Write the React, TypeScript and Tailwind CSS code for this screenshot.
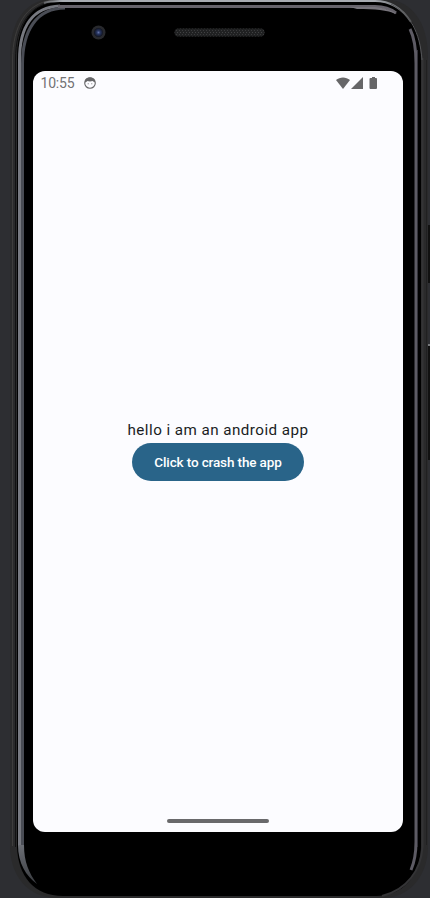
import React from "react";

function PhoneBody() {
  return (
    <svg className="absolute inset-0" width="430" height="898" viewBox="0 0 430 898" fill="none" aria-hidden="true">
      <defs>
        <linearGradient id="topRim" x1="40" y1="0" x2="420" y2="0" gradientUnits="userSpaceOnUse">
          <stop offset="0" stopColor="#555659" />
          <stop offset="0.06" stopColor="#a7abb1" />
          <stop offset="0.88" stopColor="#a7abb1" />
          <stop offset="1" stopColor="#444" />
        </linearGradient>
        <linearGradient id="lowerRim" x1="0" y1="845" x2="0" y2="884" gradientUnits="userSpaceOnUse">
          <stop offset="0" stopColor="#6c6f75" />
          <stop offset="1" stopColor="#393b40" />
        </linearGradient>
        <pattern id="mesh" width="3" height="4" patternUnits="userSpaceOnUse">
          <rect width="3" height="4" fill="#202122" />
          <rect width="1" height="1" x="0" y="0" fill="#414243" />
          <rect width="1" height="1" x="2" y="2" fill="#393a3b" />
        </pattern>
        <radialGradient id="lens">
          <stop offset="0" stopColor="#6272a8" />
          <stop offset="0.4" stopColor="#26345f" />
          <stop offset="1" stopColor="#10131e" />
        </radialGradient>
      </defs>
      <path d="M10 56C10 22 25 0 52 -1H384C412 0 428 22 428 58V848C427 876 410 898 382 898H57C28 898 11 876 10 848Z" fill="#2a2a2b" />
      <path d="M12.5 846V60C13 25 26 4 52 0" stroke="#3e3d3c" />
      <path d="M17 58C17 24 31 3 57 2H378C405 3 421 27 421 60V847C420 877 402 896 376 896H63C34 896 18 876 17 847Z" fill="#000" />
      <path d="M15.5 847V60C15.5 25 30 4 55 2" stroke="#111" />
      <path d="M44 3C49 1 54 1 60 1H375C390 1 402 8 411 22" stroke="url(#topRim)" strokeWidth="2" />
      <path d="M19.5 846V60C19.5 26 33 7 60 6" stroke="#777980" strokeWidth="3" />
      <path d="M22.5 846V64C22.5 30 37 8 65 8" stroke="#4a4d55" strokeWidth="3" />
      <path d="M18 845C18 863 26 876 37 884C29 873 24 862 24 845Z" fill="url(#lowerRim)" />
      <path d="M58 6.5H375C384 6.5 391 9 396 13" stroke="#66636b" strokeWidth="3" />
      <path d="M350 7H375C384 8 391 10 397 14C386 10 376 9 357 9Z" fill="#77747b" />
      <path d="M410 29C415 39 416 49 416 63V842C416 856 414 863 411 870" stroke="#5d5b64" strokeWidth="3" />
      <path d="M417.5 50V847" stroke="#33323a" />
      <path d="M422.5 58V847C421 870 407 890 382 896" stroke="#343436" strokeWidth="2" />
      <path d="M422 60C420 32 410 14 391 4" stroke="#555659" />
      <path d="M426.5 60V845" stroke="#202021" />
      <path d="M429 225V283M429 344V460" stroke="#111" strokeWidth="2" />
      <rect x="428" y="344" width="2" height="2" fill="#77797c" />
      <circle cx="98.5" cy="32.5" r="7" fill="#28292d" />
      <circle cx="98.5" cy="32.5" r="4.5" fill="url(#lens)" />
      <rect x="174.5" y="28.5" width="90" height="8" rx="4" fill="url(#mesh)" />
    </svg>
  );
}

function FaceIcon() {
  return (
    <svg width="12" height="12" viewBox="0 0 12 12" aria-hidden="true">
      <circle cx="6" cy="6" r="5.3" fill="none" stroke="#666668" strokeWidth="1.1" />
      <path d="M1 5.4C.8 2 3 .5 6 .5S11.2 2 11 5.4C10 4.9 9.2 4.5 8.6 4C7 4.6 5 4.6 3.4 4C3 4.7 2 5.1 1 5.4Z" fill="#666668" />
      <circle cx="4.2" cy="6.8" r=".55" fill="#666668" />
      <circle cx="7.8" cy="6.8" r=".55" fill="#666668" />
    </svg>
  );
}

function StatusIcons() {
  return (
    <svg width="44" height="13" viewBox="0 0 44 13" fill="#666668" aria-hidden="true">
      <path d="M0 3C4-.5 10-.5 14 3L7 12Z" />
      <path d="M15 12L27 0V12Z" />
      <path d="M36 0H39V1H40.2Q41 1 41 2V11Q41 12 40 12H34.5Q33.5 12 33.5 11V2Q33.5 1 34.5 1H36Z" />
    </svg>
  );
}

export default function App() {
  return (
    <main className="relative h-[898px] w-[430px] overflow-hidden bg-[#2d2e32] pl-[33px] pt-[71px] font-[Roboto,sans-serif]">
      <PhoneBody />
      <section className="relative flex h-[761px] w-[370px] flex-col overflow-hidden rounded-[12px] bg-[#fcfcff]">
        <header className="flex h-6 shrink-0 items-center pl-[7.5px] pr-[23px] text-[#727274]">
          <span className="w-[34px] whitespace-nowrap text-[14px] leading-6 tracking-[-0.2px]">10:55</span>
          <span className="ml-[9.5px]"><FaceIcon /></span>
          <span className="ml-auto"><StatusIcons /></span>
        </header>
        <div className="flex flex-1 flex-col items-center pt-[325px]">
          <p className="h-[23px] shrink-0 whitespace-nowrap text-[15.2px] leading-5 tracking-[0.45px] text-[#1a1c1e]">hello i am an android app</p>
          <button className="h-[38px] w-[172px] shrink-0 rounded-full bg-[#296489] pt-px text-[13.5px] font-medium tracking-[-0.13px] text-white">Click to crash the app</button>
        </div>
        <div className="mb-[9px] h-[4px] w-[102px] shrink-0 self-center rounded-full bg-[#69696b]" />
      </section>
    </main>
  );
}
